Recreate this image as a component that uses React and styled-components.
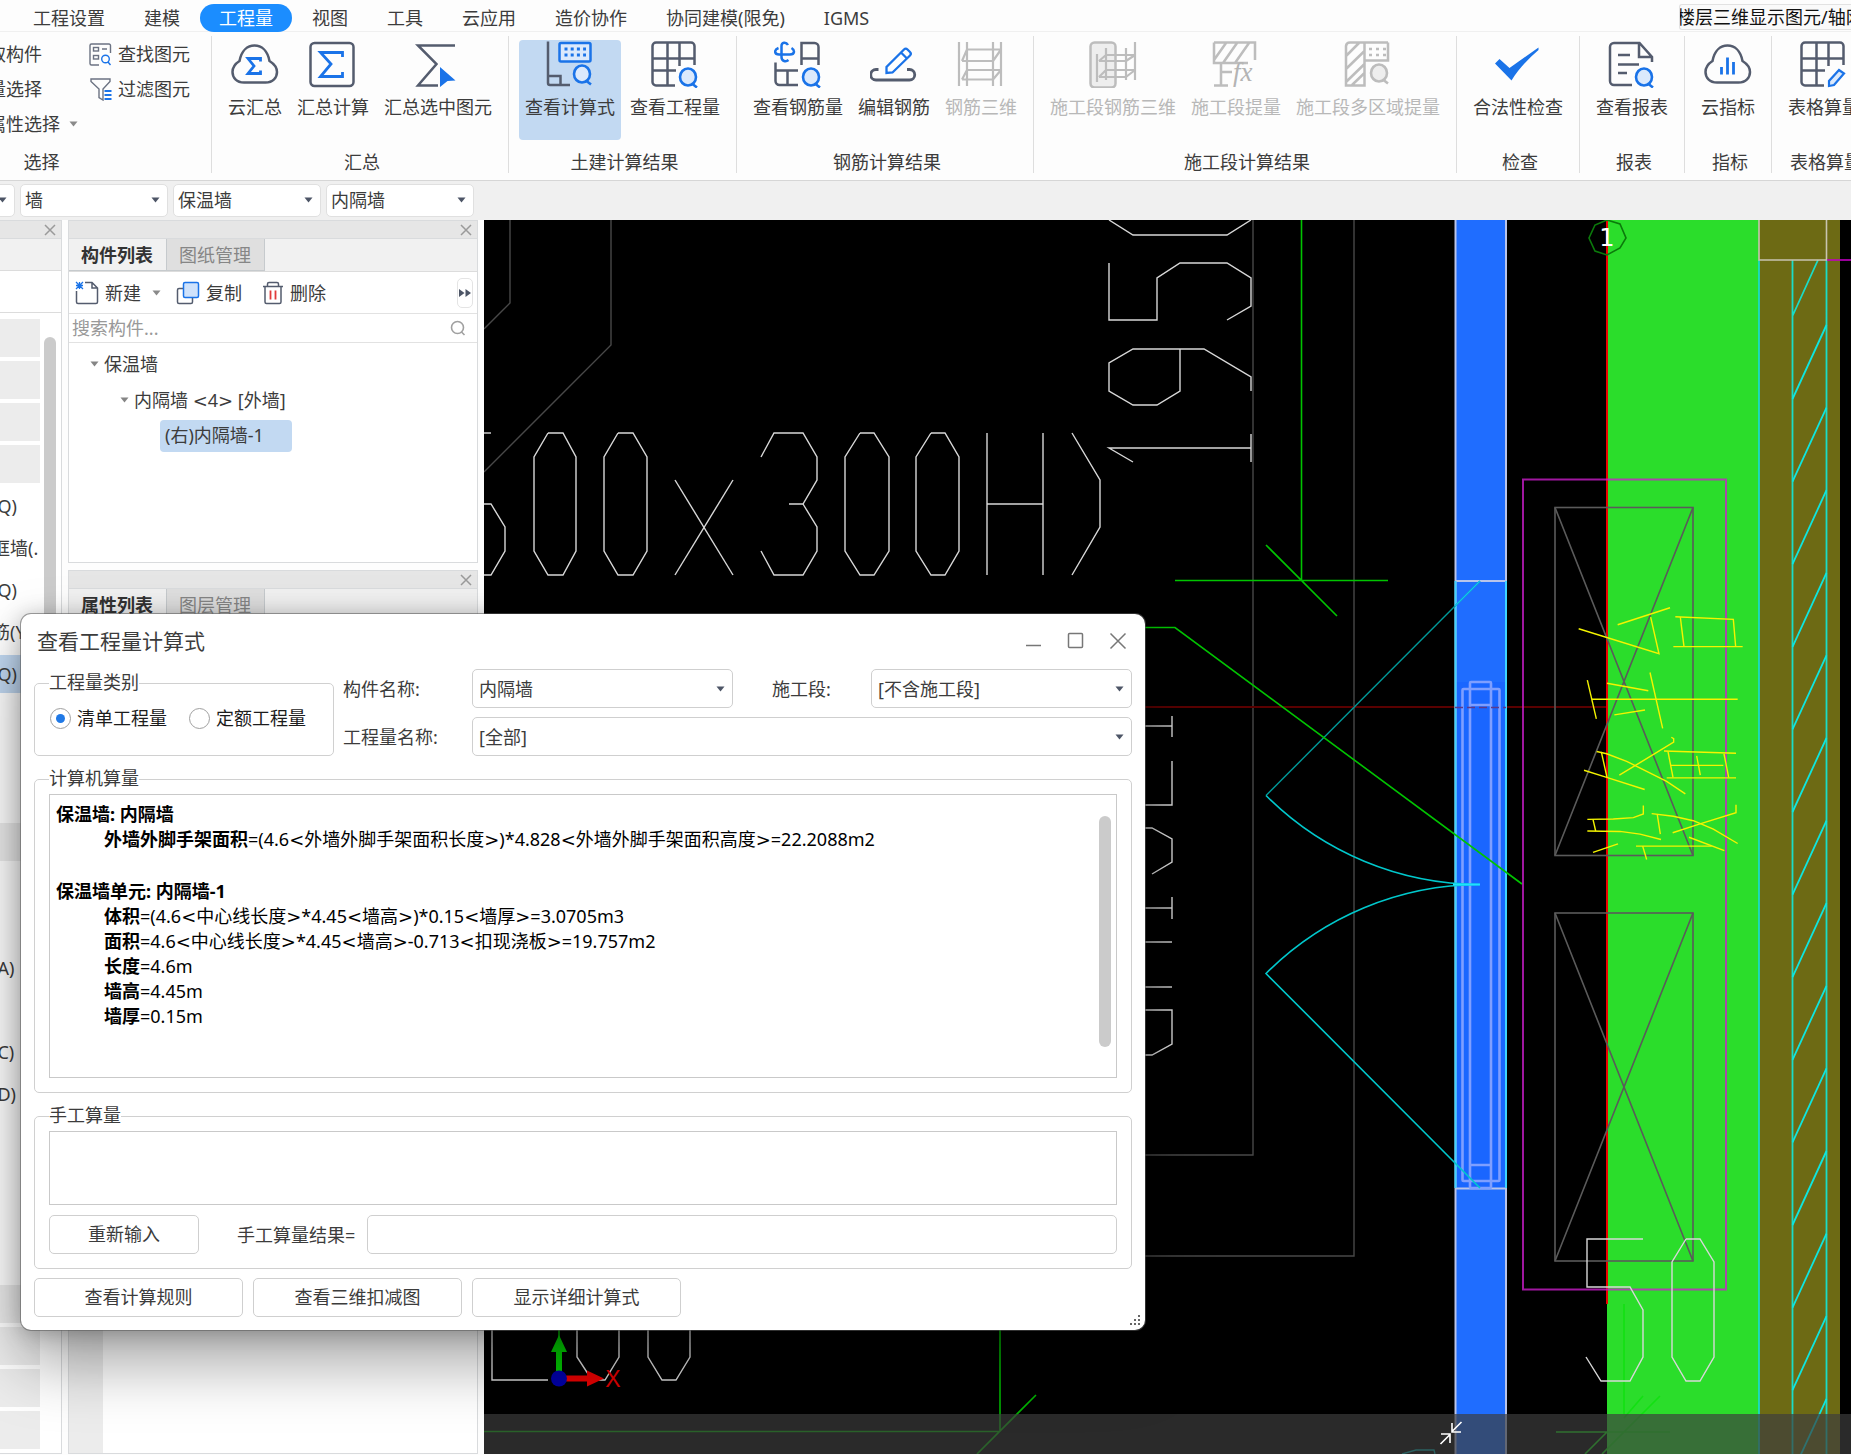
import React from "react";
import styled, { createGlobalStyle, css } from "styled-components";

const INK = "#545c6e";
const BLUE = "#1a73e8";
const PALE = "#dbe9fc";
const OFF = "#bdbdbd";

const GlobalStyle = createGlobalStyle`
  *, *::before, *::after { box-sizing: border-box; }
  html, body { margin: 0; height: 100%; background: #fff; }
  body, button, input, select, textarea {
    font-family: "Noto Sans", "Noto Sans CJK SC", sans-serif;
    font-size: 18px;
    line-height: 24px;
    color: #3c3c3c;
  }
  body { overflow: hidden; }
  button { border: 0; padding: 0; margin: 0; background: none; white-space: nowrap; }
`;

const Window = styled.div`
  position: relative;
  display: flex;
  flex-direction: column;
  height: 100vh;
  overflow: hidden;
  background: #fdfdfd;
`;

/* ---------- menu ---------- */
const MenuBar = styled.nav`
  display: flex;
  align-items: center;
  gap: 1px;
  flex: none;
  height: 32px;
  padding: 4px 0 0 14px;
  border-bottom: 1px solid #f0f0f0;
`;
const MenuItem = styled.button`
  height: 28px;
  padding: 0 19px;
  border-radius: 14px;
  line-height: 24px;
  ${(p) => p.$active && css`background: #1b8dff; color: #fff;`}
`;
const HintBox = styled.div`
  flex: none;
  align-self: flex-start;
  width: 172px;
  height: 26px;
  margin-left: auto;
  overflow: hidden;
  border: 1px solid #e2e2e2;
  border-right: 0;
  border-radius: 3px 0 0 3px;
  background: #fafafa;
  color: #111;
  text-indent: -3px;
  white-space: nowrap;
`;

/* ---------- ribbon ---------- */
const Ribbon = styled.div`
  display: flex;
  flex: none;
  height: 149px;
  padding: 4px 0 7px;
  margin-left: -132px;
  border-bottom: 1px solid #d6d6d6;
`;
const Group = styled.section`
  display: flex;
  flex-direction: column;
  justify-content: space-between;
  flex: none;
  padding: 4px 10px 0;
  border-right: 1px solid #dedede;
`;
const Tools = styled.div`
  display: flex;
  gap: 3px;
  padding-left: ${(p) => p.$inset || 0}px;
`;
const GroupName = styled.div`
  padding-left: 4px;
  line-height: 22px;
  text-align: center;
`;
const BigButton = styled.button`
  display: flex;
  flex-direction: column;
  align-items: center;
  gap: 7px;
  height: 100px;
  padding: 0 6px;
  border-radius: 4px;
  color: ${(p) => (p.disabled ? "#b8b8b8" : "#3c3c3c")};
  background: ${(p) => (p.$active ? "#c2d9f2" : "transparent")};
`;
const SmallColumn = styled.div`
  display: flex;
  flex-direction: column;
  gap: 11px;
  padding-top: 2px;
  & + & { padding-left: 8px; }
`;
const SmallButton = styled.button`
  display: flex;
  align-items: center;
  gap: 6px;
  height: 24px;
`;
const CaretSlot = styled.span`
  display: flex;
  padding-left: ${(p) => p.$gap || 3}px;
`;

/* ---------- filters ---------- */
const FilterBar = styled.div`
  display: flex;
  align-items: center;
  flex: none;
  height: 39px;
  padding-bottom: 1px;
  background: #f0f0f0;
`;
const FilterStrip = styled.div`
  display: flex;
  gap: 5px;
  margin-left: -133px;
`;
const SelectWrap = styled.div`
  position: relative;
  width: ${(p) => p.$width || "100%"};
  ${(p) => p.$wide && css`grid-column: span 3;`}
  svg {
    position: absolute;
    right: 8px;
    top: 50%;
    margin-top: -3px;
    pointer-events: none;
  }
`;
const Select = styled.select`
  display: block;
  width: 100%;
  height: ${(p) => (p.$small ? 33 : 39)}px;
  padding: 0 24px 0 ${(p) => (p.$small ? 4 : 6)}px;
  appearance: none;
  border: 1px solid ${(p) => (p.$small ? "#e0e0e0" : "#cfcfcf")};
  border-radius: 5px;
  background: #fff;
`;

/* ---------- docked panels ---------- */
const Workspace = styled.main`
  display: flex;
  flex: 1;
  min-height: 0;
  padding-bottom: 1px;
`;
const Dock = styled.div`
  display: flex;
  flex-direction: column;
  gap: 7px;
  flex: none;
  width: ${(p) => p.$width}px;
  margin: 0 6px 0 ${(p) => p.$shift || 0}px;
`;
const Panel = styled.section`
  display: flex;
  flex-direction: column;
  flex: ${(p) => (p.$height ? "none" : "1")};
  height: ${(p) => (p.$height ? p.$height + "px" : "auto")};
  min-height: 0;
  border: 1px solid #d9dbdd;
  background: #fff;
`;
const PanelHead = styled.div`
  display: flex;
  align-items: center;
  justify-content: flex-end;
  flex: none;
  height: 18px;
  padding-right: 5px;
  background: #e6e6e6;
  border-bottom: 1px solid #d9dbdd;
  button { display: flex; }
`;
const TabRow = styled.div`
  display: flex;
  flex: none;
  height: 33px;
  background: #f1f1f1;
  border-bottom: 1px solid #dcdcdc;
`;
const Tab = styled.button`
  padding: 0 13px 0 12px;
  border-right: 1px solid #c6cacd;
  border-bottom: 1px solid #c6cacd;
  line-height: 32px;
  font-weight: ${(p) => (p.$active ? 700 : 400)};
  color: ${(p) => (p.$active ? "#333" : "#868686")};
  background: ${(p) => (p.$active ? "#f1f1f1" : "#dfdfdf")};
`;
const PanelTools = styled.div`
  display: flex;
  align-items: center;
  flex: none;
  gap: 15px;
  height: 42px;
  padding: 0 4px 0 6px;
  border-bottom: 1px solid #e2e2e2;
`;
const EditTools = styled.div`
  display: flex;
  gap: 20px;
`;
const MoreButton = styled.button`
  display: grid;
  place-items: center;
  width: 16px;
  height: 30px;
  margin-left: auto;
  border: 1px solid #e4e4e4;
  border-radius: 5px;
`;
const SearchRow = styled.label`
  display: flex;
  align-items: center;
  flex: none;
  height: 29px;
  padding: 0 11px 0 3px;
  border-bottom: 1px solid #e2e2e2;
`;
const SearchInput = styled.input`
  flex: 1;
  min-width: 0;
  padding: 0;
  border: 0;
  outline: 0;
  background: none;
  &::placeholder { color: #999; opacity: 1; }
`;
const Tree = styled.ul`
  margin: 0;
  padding: 3px 0 0;
  list-style: none;
`;
const TreeRow = styled.li`
  display: flex;
  align-items: center;
  gap: 5px;
  height: 36px;
  padding-left: ${(p) => p.$indent}px;
  white-space: pre;
`;
const TreePick = styled.span`
  width: 132px;
  height: 32px;
  padding-left: 5px;
  border-radius: 4px;
  line-height: 31px;
  background: #c2d9f2;
`;
const PropertyGutter = styled.div`
  flex: 1;
  width: 34px;
  background: #ececec;
`;

/* ---------- module navigator ---------- */
const NavTop = styled.div`
  flex: none;
  height: 32px;
  background: #f1f1f1;
  border-bottom: 1px solid #dcdcdc;
`;
const NavTools = styled.div`
  flex: none;
  height: 42px;
  border-bottom: 1px solid #dcdcdc;
`;
const NavBody = styled.div`
  display: flex;
  flex: 1;
  min-height: 0;
  gap: 4px;
  padding-top: 6px;
`;
const NavList = styled.ul`
  display: flex;
  flex-direction: column;
  gap: 4px;
  width: 139px;
  margin: 0;
  padding: 0;
  overflow: hidden;
  list-style: none;
`;
const NavRow = styled.li`
  flex: none;
  height: 38px;
  padding-left: 37px;
  line-height: 38px;
  white-space: nowrap;
  background: ${(p) => ({ head: "#ececec", pick: "#c2d9f2" }[p.$kind] || "transparent")};
`;
const Thumb = styled.div`
  flex: none;
  width: 12px;
  height: ${(p) => p.$height}px;
  margin-top: ${(p) => p.$top}px;
  border-radius: 6px;
  background: #cbcbcb;
`;

/* ---------- drawing ---------- */
const Viewport = styled.div`
  position: relative;
  flex: 1;
  min-width: 0;
  overflow: hidden;
  background: #000;
  & > svg { display: block; width: 100%; height: 100%; }
`;
const StatusStrip = styled.div`
  position: absolute;
  inset: auto 0 0 0;
  display: flex;
  justify-content: center;
  align-items: center;
  height: 40px;
  padding: 0 0 2px 567px;
  background: rgba(61, 61, 61, 0.69);
`;

/* ---------- dialog ---------- */
const Dialog = styled.div`
  position: absolute;
  left: 21px;
  top: 614px;
  display: flex;
  flex-direction: column;
  width: 1124px;
  padding: 0 13px 13px;
  border-radius: 10px;
  background: #fff;
  box-shadow: 0 0 0 1px rgba(90, 90, 90, 0.55), 0 2px 21px rgba(0, 0, 0, 0.25), 0 32px 64px rgba(0, 0, 0, 0.36);
`;
const TitleBar = styled.header`
  display: flex;
  align-items: center;
  justify-content: space-between;
  height: 55px;
  padding: 0 5px 2px 3px;
`;
const Title = styled.h1`
  margin: 0;
  font-size: 21px;
  font-weight: 400;
  line-height: 28px;
`;
const WindowButtons = styled.div`
  display: flex;
  gap: 24px;
  button { display: flex; }
`;
const TopArea = styled.div`
  display: grid;
  grid-template-columns: 300px 1fr;
  gap: 9px;
`;
const Box = styled.fieldset`
  min-width: 0;
  margin: ${(p) => p.$top}px 0 0;
  padding: 4px 14px 14px;
  border: 1px solid #d0d0d0;
  border-radius: 5px;
  legend { height: 22px; padding: 0; line-height: 20px; }
`;
const Radios = styled.div`
  display: flex;
  gap: 22px;
  padding: 8px 0 0 1px;
`;
const RadioLabel = styled.label`
  display: flex;
  align-items: center;
  gap: 6px;
  color: #1c1c1c;
  white-space: nowrap;
`;
const Radio = styled.input`
  display: grid;
  place-items: center;
  width: 21px;
  height: 21px;
  margin: 0;
  appearance: none;
  border: 1px solid #a0a0a0;
  border-radius: 50%;
  background: #fff;
  &:checked::before {
    content: "";
    width: 9px;
    height: 9px;
    border-radius: 50%;
    background: #2079e6;
  }
`;
const FormGrid = styled.div`
  display: grid;
  grid-template-columns: 129px 1fr 138px 1fr;
  gap: 9px 0;
  align-items: center;
`;
const FieldLabel = styled.label`
  padding-left: ${(p) => p.$indent || 0}px;
  white-space: nowrap;
`;
const Report = styled.div`
  display: flex;
  justify-content: space-between;
  height: 284px;
  padding: 7px 5px 0 6px;
  border: 1px solid #c9c9c9;
`;
const Lines = styled.div`
  line-height: 25px;
  color: #000;
`;
const Line = styled.p`
  margin: 0;
  min-height: 27px;
  padding-left: ${(p) => (p.$nested ? 48 : 0)}px;
  white-space: nowrap;
  &:not(:empty) { height: 25px; min-height: 0; }
`;
const Angle = styled.span`
  font-family: "DejaVu Sans", sans-serif;
  line-height: 1;
`;
const Notes = styled.textarea`
  display: block;
  width: 100%;
  height: 74px;
  margin: 0 0 10px;
  border: 1px solid #c9c9c9;
  outline: 0;
  resize: none;
`;
const ResultRow = styled.div`
  display: flex;
  align-items: center;
`;
const ResultInput = styled.input`
  flex: 1;
  min-width: 0;
  height: 39px;
  margin-left: 12px;
  border: 1px solid #cfcfcf;
  border-radius: 5px;
`;
const PushButton = styled.button`
  width: ${(p) => p.$width}px;
  height: 39px;
  padding-bottom: 1px;
  border: 1px solid #cfcfcf;
  border-radius: 5px;
  background: #fff;
`;
const Actions = styled.footer`
  display: flex;
  gap: 10px;
  padding-top: 9px;
`;
const Grip = styled.svg`
  position: absolute;
  right: 3px;
  bottom: 2px;
`;

/* ---------- small glyphs ---------- */
const Caret = ({ color = "#4d5566" }) => (
  <svg width="9" height="6" viewBox="0 0 9 6"><path d="M.5 .5h8L4.500 5.500z" fill={color} /></svg>
);
const Cross = ({ size = 12, color = "#9a9a9a", width = 1.5 }) => (
  <svg width={size} height={size} viewBox="0 0 12 12">
    <path d="M1 1l10 10M11 1L1 11" stroke={color} strokeWidth={width} fill="none" />
  </svg>
);

const Lens = ({ x = 37, y = 37, c = BLUE, f = PALE }) => (
  <g stroke={c} strokeWidth="2.6" fill={f}>
    <ellipse cx={x} cy={y} rx="8" ry="8.500" />
    <path d={`M${x + 4.5} ${y + 7}l4.500 3.500`} />
  </g>
);
const Icon = ({ color = INK, children }) => (
  <svg width="48" height="48" viewBox="0 0 48 48" fill="none" stroke={color} strokeWidth="2.500">{children}</svg>
);
const cloudPath =
  "M13 42.500C5.500 42.500 1.500 37.500 1.500 32c0-5 3-8.500 7-11C10.500 10.500 16.500 5.500 23.500 5.500S36.500 10.500 38.500 21c4 2.500 7.500 6 7.500 11 0 5.500-4 10.500-11.500 10.500z";

const CloudSum = () => (
  <Icon><path d={cloudPath} /><path d="M29.500 21.500V18.500H17l6 7.500-6 7.500h12.500V30.500" stroke={BLUE} strokeWidth="2.800" /></Icon>
);
const SumIcon = () => (
  <Icon>
    <rect x="1.500" y="3" width="43" height="43" rx="4" />
    <path d="M33.500 17V12.500H11.500L22 24 11.500 36.500h22V32" stroke={BLUE} strokeWidth="2.800" />
  </Icon>
);
const SumPick = () => (
  <Icon>
    <path d="M41 5.500H4l18.500 18.500L4 45.500h20" />
    <path d="M26 27l15.500 13.500-8 .5L26 47z" fill={BLUE} stroke="none" />
  </Icon>
);
const FormulaIcon = () => (
  <Icon>
    <path d="M2 1.500V43a2 2 0 0 0 2 2h20M2 36h12.500v9" />
    <rect x="13.500" y="3" width="31" height="18.500" rx="1.500" stroke={BLUE} fill={PALE} />
    {[9, 15].map((y) => <path key={y} d={`M18.500 ${y}h21.500`} stroke={BLUE} strokeWidth="3" strokeDasharray="3 3.200" />)}
    <Lens x={36} y={34} />
  </Icon>
);
const tablePath = "M43.500 25V6a3.500 3.500 0 0 0-3.500-3.500H5A3.500 3.500 0 0 0 1.500 6v36A3.500 3.500 0 0 0 5 45.500h19M16.500 2.500v43M28.500 2.500V26M1.500 18.500h42M1.500 30.500H25";
const TableLens = () => <Icon><path d={tablePath} /><Lens /></Icon>;
const TablePen = () => (
  <Icon>
    <path d={tablePath} />
    <path d="M29 46v-5l10-11 5 3.500L34 45z" stroke={BLUE} strokeWidth="2.200" fill={PALE} />
  </Icon>
);
const RebarLens = () => (
  <Icon>
    <path d="M27.500 25V3h13a4 4 0 0 1 4 4v18M27.500 18.500h17M1.500 22.500V41a4 4 0 0 0 4 4H24M1.500 30.500H24M13.500 30.500V45" />
    <path d="M14 5C12 1.500 7.500 2 7.500 6v11c0 4.500 4.500 5 7 3M4.500 8C-.500 10 .5 14.500 5 14.500h11c5 0 5-4.500 1.500-6.500" stroke={BLUE} />
    <Lens />
  </Icon>
);
const RebarEdit = () => (
  <Icon>
    <path d="M8.500 29.500H6a5 5 0 0 0 0 10.500h33.500a5 5 0 0 0 0-10.500H37" strokeWidth="2.800" />
    <path d="M16.500 33V27L34 9.500a2.500 2.500 0 0 1 3.500 0l2.500 2.500a2.500 2.500 0 0 1 0 3.500L22.500 32.500zM31 12.500l6 6" stroke={BLUE} strokeWidth="2.300" fill="#fff" />
  </Icon>
);
const Rebar3D = () => (
  <Icon color={OFF}>
    <path d="M2 2v44M10 2v44M36 2v44M44 2v44M10 9.500h34M5 21h31M10 30h34M5 39.500h31M10 9.500L5 21M10 30l-5 9.500M44 9.500L36 21M44 30l-8 9.500" strokeWidth="2.200" />
  </Icon>
);
const StageRebar = () => (
  <Icon color={OFF}>
    <rect x="1.500" y="2.500" width="25" height="45" rx="4" fill="#eee" />
    <path d="M8 14v28M17 8v32M37 8v32M46 2v38M17 15h29M10 21h27M17 30h29M10 37h27M17 15l-7 6M17 30l-7 7M46 15l-9 6M46 30l-9 7" strokeWidth="2.200" />
  </Icon>
);
const StageAmount = () => (
  <Icon color={OFF}>
    <path d="M2 2.500h41V20M2 2.500V23h34M2 20L14 3M11 23L25 3M23 23L37 3M9 23v22.500M2 45.500h14M9 32h11" />
    <text x="21" y="41" fontFamily="Liberation Serif, serif" fontStyle="italic" fontSize="27" fill="#b4b4b4" stroke="none">fx</text>
  </Icon>
);
const StageZones = () => (
  <Icon color={OFF}>
    <path d="M44 2.500H6A4 4 0 0 0 2 6v39.500h18.500V2.500M44 2.500v18H20.500M2 16L15 3M2 29l18.500-18M2 42l18.500-18M8 45l12.500-12" />
    <path d="M25 9h17M25 15h17" strokeDasharray="3 4" />
    <Lens x={35} y={33} c={OFF} f="#eee" />
  </Icon>
);
const CheckIcon = () => (
  <Icon><path d="M1 23.500L5.500 19l10 9L44.500 7.500v2.500C34 19 24.500 29 17.500 40.500z" fill={BLUE} stroke="none" /></Icon>
);
const ReportIcon = () => (
  <Icon>
    <path d="M44 22v-5L31.500 3H6a4 4 0 0 0-4 4v34a4 4 0 0 0 4 4h18M31 3v14h13M10 15h12M10 24.500h21M10 33h9" />
    <Lens x={36} />
  </Icon>
);
const CloudChart = () => (
  <Icon><path d={cloudPath} /><path d="M17.500 27v7.500M23.500 17.500v17M29.500 22v12.500" stroke={BLUE} strokeWidth="2.800" /></Icon>
);

const FindIcon = () => (
  <svg width="23" height="23" viewBox="0 0 23 23" fill="none" stroke="#6b7282" strokeWidth="1.400">
    <path d="M21.500 10V2.500A1.500 1.500 0 0 0 20 1H2.500A1.500 1.500 0 0 0 1 2.500v18A1.500 1.500 0 0 0 2.500 22H10M13 6h5" />
    <rect x="4.500" y="4.500" width="5" height="3.500" /><rect x="4.500" y="12.500" width="5" height="3.500" />
    <circle cx="16.500" cy="16" r="3.800" stroke={BLUE} /><path d="M19 19l2.500 3" stroke={BLUE} />
  </svg>
);
const FilterIcon = () => (
  <svg width="23" height="23" viewBox="0 0 23 23" fill="none" stroke="#6b7282" strokeWidth="1.400">
    <path d="M2 1h19v2.500l-7 7.500v11l-4-2.500V11L2 3.500z" />
    <path d="M15.500 13h7M15.500 17h7M15.500 21h7" stroke={BLUE} strokeWidth="1.800" />
  </svg>
);
const NewIcon = () => (
  <svg width="24" height="24" viewBox="0 0 24 24" fill="none" stroke={INK} strokeWidth="1.500">
    <path d="M1.500 10v11A1.500 1.500 0 0 0 3 22.500h18a1.500 1.500 0 0 0 1.500-1.500V7L17 1.500h-7M17 1.500V7h5.500" />
    <path d="M1 1l7 7M8 1L1 8M4.500 1v7M1 4.500h7" stroke={BLUE} strokeWidth="1.300" />
  </svg>
);
const CopyIcon = () => (
  <svg width="24" height="24" viewBox="0 0 24 24" fill="none" stroke={INK} strokeWidth="1.500">
    <path d="M7 7.500H3A1.500 1.500 0 0 0 1.500 9v12A1.500 1.500 0 0 0 3 22.500h12a1.500 1.500 0 0 0 1.500-1.500v-4" />
    <rect x="7.500" y="1.500" width="15" height="15" rx="1.500" stroke={BLUE} fill="#cfe2fb" />
  </svg>
);
const TrashIcon = () => (
  <svg width="22" height="24" viewBox="0 0 22 24" fill="none" stroke={INK} strokeWidth="1.500">
    <path d="M1 5.500h20M5.500 5V3A1.500 1.500 0 0 1 7 1.500h8A1.500 1.500 0 0 1 16.500 3v2M3 5.500V21a1.500 1.500 0 0 0 1.500 1.500h13A1.500 1.500 0 0 0 19 21V5.500" />
    <path d="M8.500 9.500v9M13.500 9.500v9" stroke="#e23b3b" strokeWidth="1.800" />
  </svg>
);

/* ---------- plan drawing: page-space coordinates of the model view ---------- */
const capsule = (a, b, c, d) =>
  `${b},433 ${c},433 ${d},457 ${d},551 ${c},575 ${b},575 ${a},551 ${a},457 ${b},433`;
const dimensionStrokes = [
  "484,433 491,433",
  "484,504 491,504 505,527 505,551 491,575 484,575",
  capsule(534, 548, 563, 576),
  capsule(604, 618, 633, 647),
  "675,480 733,575", "733,480 675,575",
  "761,457 774,433 803,433 817,457 817,480 803,504 789,504",
  "803,504 817,527 817,551 803,575 774,575 761,551",
  capsule(845, 860, 874, 889),
  capsule(916, 931, 945, 959),
  "987,433 987,575", "1043,433 1043,575", "987,504 1043,504",
  "1072,433 1100,480 1100,527 1072,575",
  "1109,220 1133,235 1227,235 1251,220",
  "1109,263 1109,320 1157,320 1157,278 1180,263 1227,263 1251,278 1251,306 1227,320",
  "1180,349 1180,391 1157,405 1133,405 1109,391 1109,363 1133,349 1204,349 1251,377 1251,391",
  "1251,434 1251,462", "1251,448 1109,448 1133,462",
  "1145,726 1172,726", "1172,716 1172,737",
  "1172,761 1172,805 1145,805",
  "1145,828 1152,828 1172,839 1172,862 1152,874",
  "1145,908 1172,908", "1172,897 1172,919",
  "1145,942 1172,942", "1145,987 1172,987",
  "1145,1010 1172,1010 1172,1044 1152,1055 1145,1055",
  "1643,1239 1587,1239 1587,1287 1630,1287 1643,1310 1643,1357 1630,1381 1601,1381 1586,1357",
  "1686,1239 1700,1239 1714,1262 1714,1357 1700,1381 1686,1381 1672,1357 1672,1262 1686,1239",
  "492,1330 492,1380 548,1380",
  "577,1330 577,1357 592,1380 605,1380 619,1357 619,1330",
  "648,1330 648,1357 662,1380 676,1380 690,1357 690,1330",
];
const annotationStrokes = [
  "533,929 690,891", "416,938 657,994 632,912", "706,911 880,917 887,978", "721,912 732,978", "700,978 908,978",
  "501,1060 625,1077", "442,1053 469,1140", "455,1096 893,1096", "523,1131 615,1120", "630,1036 668,1161",
  "470,1213 500,1218 560,1235 680,1280 736,1308", "484,1214 501,1271", "432,1255 500,1271 614,1298",
  "538,1266 600,1238 701,1192 701,1184 694,1181", "672,1212 888,1217", "684,1213 699,1271", "693,1244 850,1244",
  "680,1272 888,1272", "770,1223 781,1266", "852,1218 866,1271",
  "442,1365 520,1364 580,1361 610,1353 610,1334", "459,1365 467,1391", "442,1391 540,1392 600,1398 663,1410",
  "459,1439 534,1420", "588,1425 815,1425", "608,1425 620,1455", "635,1352 700,1358 760,1368 820,1387 893,1419",
  "652,1355 661,1398", "698,1395 780,1375 888,1350 888,1332", "747,1405 853,1435",
];
const hatch = Array.from({ length: 14 }, (_, i) => 399 + i * 82.6);

const Plan = () => (
  <svg viewBox="484 220 1367 1234" preserveAspectRatio="xMinYMin slice" fill="none" strokeWidth="1.400">
    <g stroke="#484848">
      <path d="M510 220V303L484 329M611 220V345L484 472M1253 220V1155H1145M1354 220V1256H1145" />
    </g>
    <path d="M1145 707H1607" stroke="#5a0000" strokeWidth="2" />
    <rect x="1455" y="220" width="51" height="1234" fill="#1f6dff" />
    <rect x="1455" y="682" width="51" height="507" fill="#1a66ff" />
    <rect x="1607" y="220" width="152" height="1234" fill="#2bdd2b" />
    <rect x="1759" y="220" width="81" height="1234" fill="#6d6a14" />
    <path d="M1607 220V1304" stroke="#e00" strokeWidth="2" />
    <path d="M1455.500 220V1454M1506 220V1454M1455 581H1506M1455 1188.500H1506" stroke="#b9c4ea" strokeWidth="2" />
    <path d="M1455.500 581V1188M1506 581V1188" stroke="#3fd4ff" strokeWidth="2" />
    <g stroke="#7f9fff" strokeWidth="2.600">
      <rect x="1462.500" y="689" width="37" height="492" rx="1" />
      <rect x="1470" y="682" width="21" height="506" rx="1" />
      <path d="M1470 705H1491M1470 1165H1491" />
    </g>
    <path d="M1455 707.500H1506" stroke="#5c3a8c" strokeDasharray="8 4" />
    <path d="M1480 581L1266 795.500" stroke="#009a9a" />
    <path d="M1455 606L1480 581" stroke="#10bff0" />
    <path d="M1266 795.500A303 303 0 0 0 1480 884.500A303 303 0 0 0 1266 973.500L1480 1188" stroke="#00c8cc" strokeWidth="1.600" />
    <path d="M1175 580.500H1388M1301.500 220V580.500M1266 545L1337 616M1145 627.500H1175L1522 884" stroke="#00c400" strokeWidth="1.600" />
    <path d="M1453 884.500H1480" stroke="#1fe0ff" strokeWidth="2" />

    <path d="M1759 260V1454M1792.500 260V1454M1826.500 260V1454M1792.500 316L1818 260" stroke="#1adcc8" strokeWidth="1.800" />
    {hatch.map((y) => <path key={y} d={`M1792.500 ${y}L1826.500 ${y - 74}`} stroke="#0ee6e0" strokeWidth="1.800" />)}
    <path d="M1759 220V260H1826.500V220" stroke="#c8c4b0" strokeWidth="1.600" />
    <path d="M1827 260H1851" stroke="#c000c0" strokeWidth="1.600" />

    <rect x="1523" y="479.500" width="203" height="810" stroke="rgba(205,30,205,.78)" strokeWidth="2" />
    <g stroke="#5a5a5a" strokeWidth="1.600">
      <rect x="1555" y="507.500" width="138" height="348" />
      <path d="M1555 507.500L1693 855.500M1693 507.500L1555 855.500" />
      <rect x="1555" y="913" width="138" height="348" />
      <path d="M1555 913L1693 1261M1693 913L1555 1261" />
    </g>
    <g transform="translate(1440 210) scale(.33333 .44643)" stroke="#f4f400">
      {annotationStrokes.map((p) => <polyline key={p} points={p} vectorEffect="non-scaling-stroke" />)}
    </g>
    <path d="M1624 1304V1414M1643 1396L1624 1418M1660 1396L1602 1454M1556 1432H1670M1607 1432L1585 1454" stroke="#12e012" strokeWidth="1.600" />
    <g stroke="#d8d8d8">
      {dimensionStrokes.map((p) => <polyline key={p} points={p} />)}
    </g>
    <path d="M1607 220l13 4 6 14-6 10-13 7-12-4-6-13 6-13z" stroke="#0b7a0b" strokeWidth="1.600" />
    <text x="1607" y="246" textAnchor="middle" fontFamily="DejaVu Sans, sans-serif" fontSize="24" fill="#fff">1</text>
    <path d="M1402 1454l14-4h18l1 4" stroke="#00b0b0" />
    <path d="M484 1431.500H1000M1000 1330V1431M1036 1395L977 1454" stroke="#00b400" strokeWidth="1.600" />

    <path d="M559 1330V1340" stroke="#00c800" />
    <path d="M559 1335l8 17h-5v20h-6v-20h-5z" fill="#00c800" />
    <path d="M566 1375.500h21v-5l17 8-17 8v-5h-21z" fill="#e60000" />
    <circle cx="559" cy="1378.500" r="8" fill="#0000a8" />
    <text x="613" y="1387" textAnchor="middle" fontFamily="Liberation Sans, sans-serif" fontSize="23" fill="#e00000">X</text>
  </svg>
);

const Dropdown = ({ id, value, small, width, wide, label }) => (
  <SelectWrap $width={width} $wide={wide}>
    <Select id={id} $small={small} defaultValue={value} aria-label={label}>
      <option>{value}</option>
    </Select>
    <Caret />
  </SelectWrap>
);

const menu = ["工程设置", "建模", "工程量", "视图", "工具", "云应用", "造价协作", "协同建模(限免)", "IGMS"];
const groups = [
  { name: "汇总", tools: [["云汇总", CloudSum], ["汇总计算", SumIcon], ["汇总选中图元", SumPick]] },
  { name: "土建计算结果", tools: [["查看计算式", FormulaIcon, "active"], ["查看工程量", TableLens]] },
  { name: "钢筋计算结果", tools: [["查看钢筋量", RebarLens], ["编辑钢筋", RebarEdit], ["钢筋三维", Rebar3D, "off"]] },
  { name: "施工段计算结果", tools: [["施工段钢筋三维", StageRebar, "off"], ["施工段提量", StageAmount, "off"], ["施工段多区域提量", StageZones, "off"]] },
  { name: "检查", tools: [["合法性检查", CheckIcon]] },
  { name: "报表", tools: [["查看报表", ReportIcon]] },
  { name: "指标", tools: [["云指标", CloudChart]] },
  { name: "表格算量", tools: [["表格算量", TablePen]] },
];

const navRows = [
  ["", "head"], ["", "head"], ["", "head"], ["", "head"],
  ["剪力墙(Q)"], ["人防门框墙(."], ["砌体墙(Q)"], ["砌体加筋(Y)"], ["保温墙(Q)", "pick"],
  [""], [""], [""], ["", "head"], [""], [""],
  ["门联窗(A)"], [""], ["带形窗(C)"], ["带形洞(D)"],
  [""], [""], [""], [""], ["", "head"], ["", "head"], ["", "head"], ["", "head"],
];

const Ref = ({ children }) => (
  <><Angle>&lt;</Angle>{children}<Angle>&gt;</Angle></>
);

const PanelTitle = () => (
  <PanelHead><button aria-label="关闭"><Cross /></button></PanelHead>
);

export default function App() {
  return (
    <Window>
      <GlobalStyle />
      <MenuBar>
        {menu.map((m) => <MenuItem key={m} $active={m === "工程量"}>{m}</MenuItem>)}
        <HintBox>楼层三维显示图元/轴网</HintBox>
      </MenuBar>

      <Ribbon>
        <Group>
          <Tools $inset={92}>
            <SmallColumn>
              <SmallButton>拾取构件</SmallButton>
              <SmallButton>批量选择</SmallButton>
              <SmallButton>按属性选择<CaretSlot><Caret color="#8a8a8a" /></CaretSlot></SmallButton>
            </SmallColumn>
            <SmallColumn>
              <SmallButton><FindIcon />查找图元</SmallButton>
              <SmallButton><FilterIcon />过滤图元</SmallButton>
            </SmallColumn>
            <CaretSlot $gap={8} />
          </Tools>
          <GroupName>选择</GroupName>
        </Group>
        {groups.map((g) => (
          <Group key={g.name}>
            <Tools>
              {g.tools.map(([name, Glyph, state]) => (
                <BigButton key={name} $active={state === "active"} disabled={state === "off"}>
                  <Glyph />{name}
                </BigButton>
              ))}
            </Tools>
            <GroupName>{g.name}</GroupName>
          </Group>
        ))}
      </Ribbon>

      <FilterBar>
        <FilterStrip>
          <Dropdown small width="148px" value="首层" label="楼层" />
          <Dropdown small width="148px" value="墙" label="构件大类" />
          <Dropdown small width="148px" value="保温墙" label="构件类型" />
          <Dropdown small width="148px" value="内隔墙" label="构件" />
        </FilterStrip>
      </FilterBar>

      <Workspace>
        <Dock $width={162} $shift={-100}>
          <Panel>
            <PanelTitle />
            <NavTop />
            <NavTools />
            <NavBody>
              <NavList>
                {navRows.map(([text, kind], i) => <NavRow key={i} $kind={kind}>{text}</NavRow>)}
              </NavList>
              <Thumb $height={760} $top={18} />
            </NavBody>
          </Panel>
        </Dock>

        <Dock $width={410}>
          <Panel $height={343}>
            <PanelTitle />
            <TabRow><Tab $active>构件列表</Tab><Tab>图纸管理</Tab></TabRow>
            <PanelTools>
              <SmallButton><NewIcon />新建<CaretSlot $gap={5}><Caret color="#8a8a8a" /></CaretSlot></SmallButton>
              <EditTools>
                <SmallButton><CopyIcon />复制</SmallButton>
                <SmallButton><TrashIcon />删除</SmallButton>
              </EditTools>
              <MoreButton aria-label="更多">
                <svg width="12" height="8" viewBox="0 0 12 8"><path d="M0 0l5.500 4L0 8zM6.500 0L12 4 6.500 8z" fill="#4d5566" /></svg>
              </MoreButton>
            </PanelTools>
            <SearchRow>
              <SearchInput placeholder="搜索构件..." aria-label="搜索构件" />
              <svg width="16" height="16" viewBox="0 0 16 16" fill="none" stroke="#a0a0a0" strokeWidth="1.600">
                <circle cx="7.500" cy="7.500" r="6" /><path d="M11.500 12l3 3" />
              </svg>
            </SearchRow>
            <Tree>
              <TreeRow $indent={21}><Caret color="#858585" />保温墙</TreeRow>
              <TreeRow $indent={51}><Caret color="#858585" /><span>{"内隔墙 "}<Angle>&lt;</Angle>4<Angle>&gt;</Angle>{" [外墙]"}</span></TreeRow>
              <TreeRow $indent={91}><TreePick>(右)内隔墙-1</TreePick></TreeRow>
            </Tree>
          </Panel>
          <Panel>
            <PanelTitle />
            <TabRow><Tab $active>属性列表</Tab><Tab>图层管理</Tab></TabRow>
            <PropertyGutter />
          </Panel>
        </Dock>

        <Viewport>
          <Plan />
          <StatusStrip>
            <svg width="24" height="24" viewBox="0 0 24 24" fill="none" stroke="#fff" strokeWidth="1.600">
              <path d="M22.500 1L13 10.500M13 2v9h9M1.500 23L11 13.500M2 13h9v9" />
            </svg>
          </StatusStrip>
        </Viewport>
      </Workspace>

      <Dialog role="dialog" aria-label="查看工程量计算式">
        <TitleBar>
          <Title>查看工程量计算式</Title>
          <WindowButtons>
            <button aria-label="最小化"><svg width="18" height="18" viewBox="0 0 18 18"><path d="M1 13.500h15" stroke="#777" strokeWidth="1.500" /></svg></button>
            <button aria-label="最大化"><svg width="18" height="18" viewBox="0 0 18 18"><rect x="1.500" y="1.500" width="14" height="14" rx="1" fill="none" stroke="#777" strokeWidth="1.500" /></svg></button>
            <button aria-label="关闭窗口"><Cross size={18} color="#777" width={1} /></button>
          </WindowButtons>
        </TitleBar>

        <TopArea>
          <Box $top={3}>
            <legend>工程量类别</legend>
            <Radios>
              <RadioLabel><Radio type="radio" name="kind" defaultChecked />清单工程量</RadioLabel>
              <RadioLabel><Radio type="radio" name="kind" />定额工程量</RadioLabel>
            </Radios>
          </Box>
          <FormGrid>
            <FieldLabel htmlFor="part">构件名称:</FieldLabel>
            <Dropdown id="part" value="内隔墙" />
            <FieldLabel htmlFor="stage" $indent={39}>施工段:</FieldLabel>
            <Dropdown id="stage" value="[不含施工段]" />
            <FieldLabel htmlFor="amount">工程量名称:</FieldLabel>
            <Dropdown id="amount" value="[全部]" wide />
          </FormGrid>
        </TopArea>

        <Box $top={12}>
          <legend>计算机算量</legend>
          <Report>
            <Lines>
              <Line><b>保温墙: 内隔墙</b></Line>
              <Line $nested><b>外墙外脚手架面积</b>=(4.6<Ref>外墙外脚手架面积长度</Ref>)*4.828<Ref>外墙外脚手架面积高度</Ref>=22.2088m2</Line>
              <Line />
              <Line><b>保温墙单元: 内隔墙-1</b></Line>
              <Line $nested><b>体积</b>=(4.6<Ref>中心线长度</Ref>*4.45<Ref>墙高</Ref>)*0.15<Ref>墙厚</Ref>=3.0705m3</Line>
              <Line $nested><b>面积</b>=4.6<Ref>中心线长度</Ref>*4.45<Ref>墙高</Ref>-0.713<Ref>扣现浇板</Ref>=19.757m2</Line>
              <Line $nested><b>长度</b>=4.6m</Line>
              <Line $nested><b>墙高</b>=4.45m</Line>
              <Line $nested><b>墙厚</b>=0.15m</Line>
            </Lines>
            <Thumb $height={231} $top={14} />
          </Report>
        </Box>

        <Box $top={12}>
          <legend>手工算量</legend>
          <Notes aria-label="手工算量" />
          <ResultRow>
            <PushButton $width={150}>重新输入</PushButton>
            <FieldLabel htmlFor="result" $indent={38}>手工算量结果=</FieldLabel>
            <ResultInput id="result" />
          </ResultRow>
        </Box>

        <Actions>
          <PushButton $width={209}>查看计算规则</PushButton>
          <PushButton $width={209}>查看三维扣减图</PushButton>
          <PushButton $width={209}>显示详细计算式</PushButton>
        </Actions>
        <Grip width="14" height="14" viewBox="0 0 14 14" fill="#666">
          <path d="M10 1h2v2h-2zM10 5h2v2h-2zM6 5h2v2H6zM10 9h2v2h-2zM6 9h2v2H6zM2 9h2v2H2z" />
        </Grip>
      </Dialog>
    </Window>
  );
}
